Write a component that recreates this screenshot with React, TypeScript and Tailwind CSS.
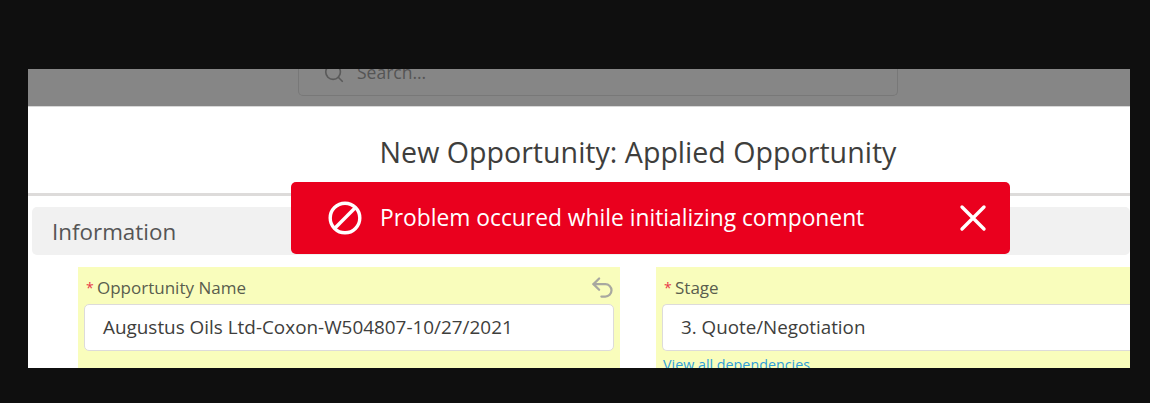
import React from "react";
import { Search, Undo2 } from "lucide-react";

const font = "font-['Open_Sans','Noto_Sans',sans-serif]";

const Label = ({ text }: { text: string }) => (
  <div className="flex items-center h-[20px] pl-[2px] text-[17px] leading-[20px] text-[#5a5e4e]">
    <span className="w-[11px] text-[#e8394a] text-[14px]">*</span>
    <span>{text}</span>
  </div>
);

const App: React.FC = () => {
  return (
    <div className={`${font} w-[1150px] h-[403px] bg-[#0f0f0f] pt-[69px] pl-[28px] overflow-hidden`}>
      <div className="relative w-[1102px] h-[299px] bg-white overflow-hidden">
        {/* dimmed top bar with the search box cut off */}
        <div className="h-[38px] bg-[#868686] border-b border-[#d8d8d8] pl-[270px]">
          <div className="w-[600px] h-[27px] border border-t-0 border-[#787878] rounded-b-[5px] flex items-end pb-[13px] pl-[24px] gap-[12px] text-[#555]">
            <Search size={22} strokeWidth={1.8} className="text-[#5a5a5a] shrink-0 -mb-[2px]" />
            <span className="text-[17.5px] leading-[20px]">Search...</span>
          </div>
        </div>

        <div className="h-[87px] pt-[26px] text-center">
          <h1 className="text-[28.6px] leading-[38px] text-[#3e3e3c] pl-[118px] font-normal">
            New Opportunity: Applied Opportunity
          </h1>
        </div>
        <div className="h-[3px] bg-[#dddbda] -mt-[1px]" />

        <div className="mt-[11px] ml-[4px] h-[48px] pt-[2px] bg-[#f1f1f1] rounded-[5px] pl-[20px] flex items-center text-[22.4px] text-[#555555]">
          Information
        </div>

        <div className="mt-[12px] ml-[50px] flex gap-[36px]">
          <div className="relative w-[542px] h-[110px] bg-[#f9fdbc] px-[6px] pt-[11px]">
            <Label text="Opportunity Name" />
            <Undo2 size={27} strokeWidth={2} className="absolute right-[4px] top-[7px] text-[#a8a8a0]" />
            <div className="mt-[6px] h-[47px] bg-white border border-[#dddbda] rounded-[5px] pl-[18px] flex items-center text-[18.9px] text-[#3e3e3c]">
              Augustus Oils Ltd-Coxon-W504807-10/27/2021
            </div>
          </div>
          <div className="flex-1 h-[110px] bg-[#f9fdbc] pl-[6px] pt-[11px]">
            <Label text="Stage" />
            <div className="mt-[6px] h-[47px] bg-white border-y border-l border-[#dddbda] rounded-l-[5px] pl-[18px] flex items-center text-[18.8px] text-[#3e3e3c]">
              3. Quote/Negotiation
            </div>
            <div className="mt-[5px] pl-px text-[14.3px] leading-[18px] text-[#2f9fd8]">View all dependencies</div>
          </div>
        </div>

        {/* error toast */}
        <div className="absolute left-[263px] top-[113px] w-[719px] h-[72px] bg-[#ea001e] rounded-[5px] flex items-center pl-[36px] pr-[23px] text-white">
          <svg width="36" height="36" viewBox="0 0 36 36" fill="none" stroke="white" strokeWidth="3.4" className="shrink-0">
            <circle cx="18" cy="18" r="14.8" />
            <path d="M7.8 28.2 28.2 7.8" />
          </svg>
          <span className="ml-[17px] text-[22.8px] leading-[30px] flex-1 whitespace-nowrap">Problem occured while initializing component</span>
          <svg width="28" height="28" viewBox="0 0 28 28" fill="none" stroke="white" strokeWidth="3.4" strokeLinecap="round" className="shrink-0">
            <path d="M3 3 25 25M25 3 3 25" />
          </svg>
        </div>
      </div>
    </div>
  );
};

export default App;
